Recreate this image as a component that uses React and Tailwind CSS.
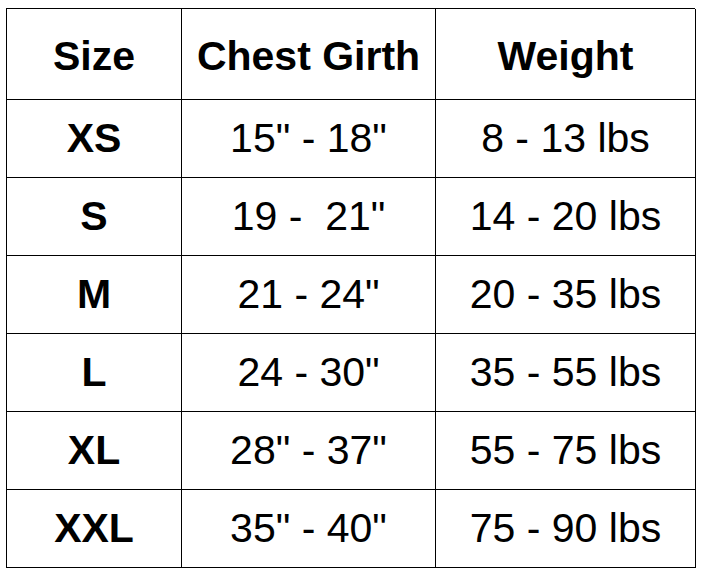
import React from 'react';

const rows = [
  ['XS', '15" - 18"', '8 - 13 lbs'],
  ['S', '19 -  21"', '14 - 20 lbs'],
  ['M', '21 - 24"', '20 - 35 lbs'],
  ['L', '24 - 30"', '35 - 55 lbs'],
  ['XL', '28" - 37"', '55 - 75 lbs'],
  ['XXL', '35" - 40"', '75 - 90 lbs'],
];

function Cell({ children, bold, head }) {
  return (
    <div
      className={`flex items-center justify-center border-r border-b border-black whitespace-pre text-[41px] leading-none text-black ${
        bold ? 'font-bold' : 'font-normal'
      } ${head ? 'h-[91px] pt-[5px]' : 'h-[78px]'}`}
    >
      {children}
    </div>
  );
}

export default function App() {
  return (
    <div
      className="w-[702px] h-[577px] bg-white pt-[8px] pl-[6px]"
      style={{ fontFamily: '"Liberation Sans", Arial, sans-serif' }}
    >
      <div className="grid grid-cols-[175px_254px_260px] w-[689px] border-l border-t border-black">
        <Cell bold head>Size</Cell>
        <Cell bold head>Chest Girth</Cell>
        <Cell bold head>Weight</Cell>
        {rows.map(r => (
          <React.Fragment key={r[0]}>
            <Cell bold>{r[0]}</Cell>
            <Cell>{r[1]}</Cell>
            <Cell>{r[2]}</Cell>
          </React.Fragment>
        ))}
      </div>
    </div>
  );
}
